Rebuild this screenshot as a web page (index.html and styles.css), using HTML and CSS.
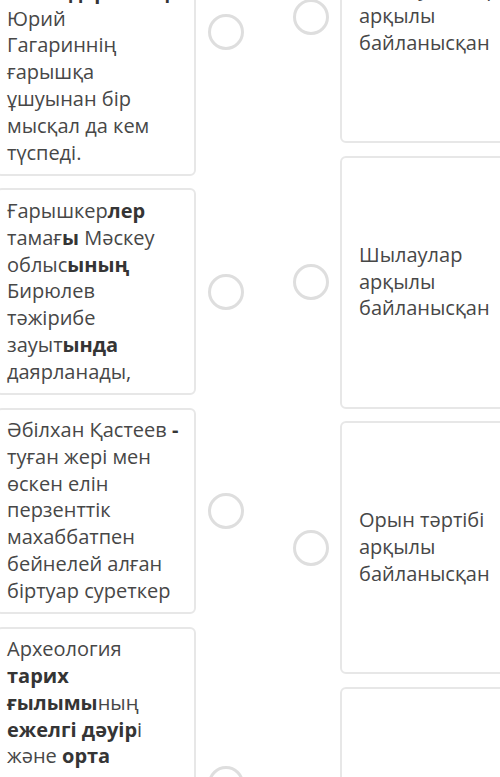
FILE: index.html
```html
<!DOCTYPE html>
<html lang="kk">
<head>
<meta charset="utf-8">
<title>Сәйкестендіру</title>
<link rel="stylesheet" href="styles.css">
</head>
<body>
<main class="board">
  <section class="col col-left">
    <div class="item">
      <div class="card"><p>Ғарышкерлер тамағының құнарлылығы, <b>тағамдарының</b> Юрий Гагариннің ғарышқа ұшуынан бір мысқал да кем түспеді.</p></div>
      <span class="radio"></span>
    </div>
    <div class="item">
      <div class="card"><p>Ғарышкер<b>лер</b> тамағ<b>ы</b> Мәскеу облыс<b>ының</b> Бирюлев тәжірибе зауыт<b>ында</b> даярланады,</p></div>
      <span class="radio"></span>
    </div>
    <div class="item">
      <div class="card"><p>Әбілхан Қастеев <b>-</b> туған жері мен өскен елін перзенттік махаббатпен бейнелей алған біртуар суреткер</p></div>
      <span class="radio"></span>
    </div>
    <div class="item">
      <div class="card"><p>Археология <b>тарих ғылымы</b>ның <b>ежелгі дәуір</b>і және <b>орта ғасырлар</b> кезеңін заттай деректер арқылы зерттейтін саласы болып табылады.</p></div>
      <span class="radio"></span>
    </div>
  </section>
  <section class="col col-right">
    <div class="item">
      <span class="radio"></span>
      <div class="card card-answer"><p>Жалғаулықтар арқылы байланысқан</p></div>
    </div>
    <div class="item">
      <span class="radio"></span>
      <div class="card card-answer"><p>Шылаулар арқылы байланысқан</p></div>
    </div>
    <div class="item">
      <span class="radio"></span>
      <div class="card card-answer"><p>Орын тәртібі арқылы байланысқан</p></div>
    </div>
    <div class="item">
      <span class="radio"></span>
      <div class="card card-answer"><p>Интонация арқылы байланысқан</p></div>
    </div>
  </section>
</main>
</body>
</html>
```
FILE: styles.css
```css
html, body {
  margin: 0;
  padding: 0;
  background: #ffffff;
  overflow: hidden;
  height: 777px;
}

body {
  font-family: "Open Sans", "Noto Sans", sans-serif;
  font-size: 20px;
  line-height: 26.8px;
  color: #474747;
}

.board {
  display: flex;
  align-items: flex-start;
  margin-left: -4px;
}

.col {
  display: flex;
  flex-direction: column;
  gap: 12.5px;
}

.col-left {
  margin-top: -111px;
}

.col-right {
  margin-top: -110px;
  margin-left: 49px;
}

.item {
  display: flex;
  align-items: center;
}

.col-left .item {
  gap: 12px;
}

.col-right .item {
  gap: 11px;
}

.card {
  box-sizing: border-box;
  width: 200px;
  flex: none;
  border: 2px solid #e7e7e7;
  border-radius: 6px;
  background: #ffffff;
  padding: 7.5px 14.6px 7.5px 9px;
}

.card p {
  margin: 0;
}

.card b {
  font-weight: 700;
  color: #353535;
}

.card-answer {
  height: 253px;
  display: flex;
  align-items: center;
  padding: 8px 19px 8px 17px;
}

.radio {
  box-sizing: border-box;
  flex: none;
  width: 36px;
  height: 36px;
  border: 3px solid #dedede;
  border-radius: 50%;
  background: #ffffff;
}
```
